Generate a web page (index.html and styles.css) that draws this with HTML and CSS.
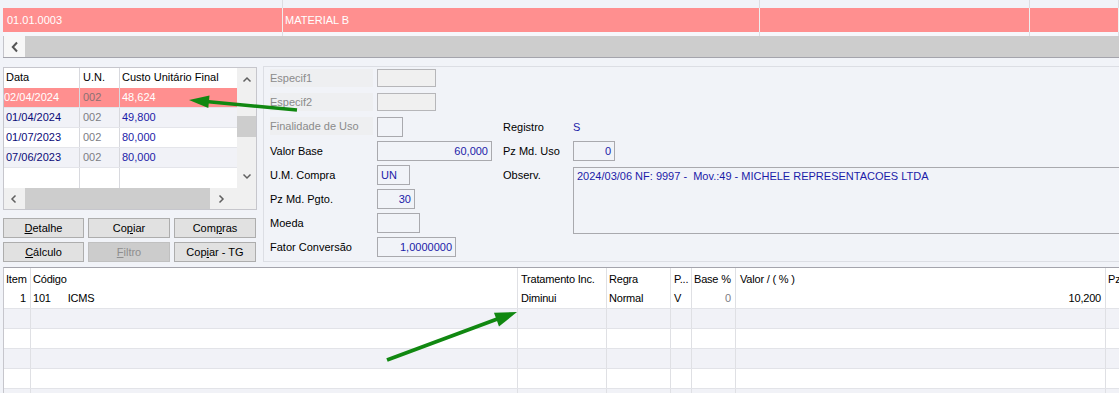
FILE: index.html
```html
<!DOCTYPE html>
<html lang="pt-BR">
<head>
    <meta charset="UTF-8">
    <title>Custo de Produto</title>
    <link rel="stylesheet" href="styles.css">
</head>
<body>
    <div class="top-grid">
        <div class="top-line top-head">
            <span class="t1"></span><span class="t2"></span><span class="t3"></span><span class="t4"></span>
        </div>
        <div class="top-line top-row">
            <span class="t1">01.01.0003</span><span class="t2">MATERIAL B</span><span class="t3"></span><span class="t4"></span>
        </div>
        <div class="top-line top-tail">
            <span class="t1"></span><span class="t2"></span><span class="t3"></span><span class="t4"></span>
        </div>
        <div class="top-scroll">
            <span class="top-btn">
                <svg width="10" height="12" viewBox="0 0 10 12"><path d="M7 1.5 L2.8 6 L7 10.5" fill="none" stroke="#555" stroke-width="2"/></svg>
            </span>
            <span class="top-track"></span>
        </div>
    </div>

    <div class="middle">
        <div class="left-col">
            <div class="list">
                <div class="list-main">
                    <div class="list-rows">
                        <div class="lrow head"><span class="l-data">Data</span><span class="l-un">U.N.</span><span class="l-custo">Custo Unitário Final</span></div>
                        <div class="lrow sel"><span class="l-data">02/04/2024</span><span class="l-un">002</span><span class="l-custo">48,624</span></div>
                        <div class="lrow alt"><span class="l-data">01/04/2024</span><span class="l-un">002</span><span class="l-custo">49,800</span></div>
                        <div class="lrow"><span class="l-data">01/07/2023</span><span class="l-un">002</span><span class="l-custo">80,000</span></div>
                        <div class="lrow alt"><span class="l-data">07/06/2023</span><span class="l-un">002</span><span class="l-custo">80,000</span></div>
                        <div class="lrow last"><span class="l-data"></span><span class="l-un"></span><span class="l-custo"></span></div>
                    </div>
                    <div class="vscroll">
                        <svg class="chev" width="10" height="10" viewBox="0 0 10 10"><path d="M1.5 6.5 L5 3 L8.5 6.5" fill="none" stroke="#606060" stroke-width="1.5"/></svg>
                        <span class="vthumb"></span>
                        <svg class="chev down" width="10" height="10" viewBox="0 0 10 10"><path d="M1.5 3.5 L5 7 L8.5 3.5" fill="none" stroke="#606060" stroke-width="1.5"/></svg>
                    </div>
                </div>
                <div class="list-foot">
                    <div class="hscroll">
                        <svg class="chev" width="10" height="10" viewBox="0 0 10 10"><path d="M6.5 1.5 L3 5 L6.5 8.5" fill="none" stroke="#606060" stroke-width="1.5"/></svg>
                        <span class="hthumb"></span>
                        <svg class="chev" width="10" height="10" viewBox="0 0 10 10"><path d="M3.5 1.5 L7 5 L3.5 8.5" fill="none" stroke="#606060" stroke-width="1.5"/></svg>
                    </div>
                    <div class="corner"></div>
                </div>
            </div>

            <div class="btns">
                <button class="btn"><u>D</u>etalhe</button>
                <button class="btn">Co<u>p</u>iar</button>
                <button class="btn">Com<u>p</u>ras</button>
                <button class="btn"><u>C</u>álculo</button>
                <button class="btn off"><u>F</u>iltro</button>
                <button class="btn">Cop<u>i</u>ar - TG</button>
            </div>
        </div>

        <div class="form">
            <span class="lbl off">Especif1</span>
            <span class="box off short" style="width: 59px;"></span>
            <span></span><span></span>

            <span class="lbl off">Especif2</span>
            <span class="box off short" style="width: 59px;"></span>
            <span></span><span></span>

            <span class="lbl off">Finalidade de Uso</span>
            <span class="box" style="width: 26px;"></span>
            <span class="lbl">Registro</span>
            <span class="val">S</span>

            <span class="lbl">Valor Base</span>
            <span class="box num" style="width: 115px;">60,000</span>
            <span class="lbl">Pz Md. Uso</span>
            <span class="box num" style="width: 42px;">0</span>

            <span class="lbl">U.M. Compra</span>
            <span class="box" style="width: 33px;">UN</span>
            <span class="lbl">Observ.</span>
            <span class="memo">2024/03/06 NF: 9997 -&nbsp; Mov.:49 - MICHELE REPRESENTACOES LTDA</span>

            <span class="lbl">Pz Md. Pgto.</span>
            <span class="box num" style="width: 38px;">30</span>
            <span></span>

            <span class="lbl">Moeda</span>
            <span class="box" style="width: 43px;"></span>
            <span></span>

            <span class="lbl">Fator Conversão</span>
            <span class="box num" style="width: 79px;">1,0000000</span>
            <span></span><span></span>
        </div>
    </div>

    <div class="tax-grid">
        <div class="grow ghead">
            <span class="g-item">Item</span><span class="g-cod">Código</span><span class="g-trat">Tratamento Inc.</span><span class="g-regra">Regra</span><span class="g-p">P...</span><span class="g-base">Base %</span><span class="g-valor">Valor / ( % )</span><span class="g-pz">Pz</span>
        </div>
        <div class="grow gdata">
            <span class="g-item r">1</span><span class="g-cod">101<span class="g-name">ICMS</span></span><span class="g-trat">Diminui</span><span class="g-regra">Normal</span><span class="g-p">V</span><span class="g-base r dim">0</span><span class="g-valor r">10,200</span><span class="g-pz"></span>
        </div>
        <div class="grow alt"><span class="g-item"></span><span class="g-cod"></span><span class="g-trat"></span><span class="g-regra"></span><span class="g-p"></span><span class="g-base"></span><span class="g-valor"></span><span class="g-pz"></span></div>
        <div class="grow"><span class="g-item"></span><span class="g-cod"></span><span class="g-trat"></span><span class="g-regra"></span><span class="g-p"></span><span class="g-base"></span><span class="g-valor"></span><span class="g-pz"></span></div>
        <div class="grow alt"><span class="g-item"></span><span class="g-cod"></span><span class="g-trat"></span><span class="g-regra"></span><span class="g-p"></span><span class="g-base"></span><span class="g-valor"></span><span class="g-pz"></span></div>
        <div class="grow"><span class="g-item"></span><span class="g-cod"></span><span class="g-trat"></span><span class="g-regra"></span><span class="g-p"></span><span class="g-base"></span><span class="g-valor"></span><span class="g-pz"></span></div>
        <div class="grow alt"><span class="g-item"></span><span class="g-cod"></span><span class="g-trat"></span><span class="g-regra"></span><span class="g-p"></span><span class="g-base"></span><span class="g-valor"></span><span class="g-pz"></span></div>
    </div>

    <!-- setas de anotação por cima da tela -->
    <svg class="marks" width="1119" height="393" viewBox="0 0 1119 393">
        <line x1="297" y1="110" x2="206" y2="101.5" stroke="#118811" stroke-width="3.5"/>
        <polygon points="189,100 209.5,95.5 208.3,108" fill="#118811"/>
        <line x1="387" y1="360" x2="500" y2="318" stroke="#118811" stroke-width="4"/>
        <polygon points="517,312 494,312.8 499,326.5" fill="#118811"/>
    </svg>
</body>
</html>
```

FILE: styles.css
```css
html, body {
    margin: 0;
    padding: 0;
}
body {
    width: 1119px;
    height: 393px;
    overflow: hidden;
    position: relative;
    background-color: #f1f3f8;
    font-family: "Liberation Sans", Arial, sans-serif;
    font-size: 11px;
    color: #000;
}

/* grade superior */
.top-grid {
    margin-left: 3px;
    overflow: hidden;
    border-bottom: 1px solid #a4a4ac;
}
.top-line {
    display: flex;
}
.top-line span {
    box-sizing: border-box;
    flex: none;
    border-right: 1px solid #dcdde2;
}
.top-line .t1 { width: 280px; }
.top-line .t2 { width: 477px; }
.top-line .t3 { width: 270px; }
.top-line .t4 { flex: 1; }
.top-head {
    height: 8px;
}
.top-row {
    height: 24px;
    background-color: #ff8f8f;
}
.top-row span {
    border-right-color: #eee;
    color: #fff;
    line-height: 24px;
    padding-left: 4px;
}
.top-row .t2 {
    padding-left: 2px;
}
.top-tail {
    height: 4px;
    background-color: #f6f7fb;
}
.top-scroll {
    display: flex;
    height: 21px;
    border-left: 1px solid #c4c4ca;
}
.top-btn {
    width: 21px;
    background-color: #f7f7f7;
    display: flex;
    align-items: center;
    justify-content: center;
}
.top-track {
    flex: 1;
    background-color: #cdcdcd;
}

/* meio */
.middle {
    display: flex;
    margin-top: 8px;
    gap: 6px;
}
.left-col {
    margin-left: 3px;
    margin-top: 1px;
    width: 254px;
    flex: none;
}
.list {
    box-sizing: border-box;
    width: 254px;
    height: 143px;
    border: 1px solid #c6c6cc;
    background-color: #fff;
}
.list-main {
    display: flex;
    height: 120px;
}
.list-rows {
    width: 233px;
}
.lrow {
    display: flex;
    height: 20px;
    box-sizing: border-box;
    border-bottom: 1px solid #e4e5ea;
    line-height: 19px;
}
.lrow span {
    box-sizing: border-box;
    border-right: 1px solid #d8d9de;
    padding-left: 2px;
    white-space: nowrap;
    overflow: hidden;
}
.lrow .l-data { width: 76px; color: #0b0b78; }
.lrow .l-un { width: 40px; color: #7c7c84; padding-left: 3px; }
.lrow .l-custo { width: 117px; color: #1b1ba8; border-right: none; }
.lrow.head span { color: #000; }
.lrow.head { border-bottom: none; }
.lrow.sel { background-color: #ff8f8f; }
.lrow.sel .l-data,
.lrow.sel .l-custo { color: #fff; }
.lrow.sel .l-un { color: #8b6f72; }
.lrow.sel .l-data { padding-left: 0; }
.lrow.alt { background-color: #f1f2f7; }
.lrow.last { border-bottom: none; }

.vscroll {
    width: 19px;
    background-color: #f0f0f0;
    position: relative;
}
.chev {
    display: block;
}
.vscroll .chev {
    position: absolute;
    left: 5px;
    top: 7px;
}
.vscroll .chev.down {
    top: auto;
    bottom: 7px;
}
.vthumb {
    position: absolute;
    left: 0;
    top: 48px;
    width: 19px;
    height: 21px;
    background-color: #cdcdcd;
}
.list-foot {
    display: flex;
    height: 21px;
}
.hscroll {
    width: 233px;
    display: flex;
    align-items: center;
    background-color: #f0f0f0;
    padding-left: 5px;
    box-sizing: border-box;
    gap: 6px;
}
.hthumb {
    width: 185px;
    height: 21px;
    background-color: #cdcdcd;
}
.corner {
    width: 19px;
    background-color: #f0f0f0;
}

/* botões */
.btns {
    display: grid;
    grid-template-columns: 81px 82px 82px;
    grid-auto-rows: 20px;
    column-gap: 4px;
    row-gap: 4px;
    margin-top: 8px;
}
.btn {
    box-sizing: border-box;
    height: 20px;
    padding: 0;
    border: 1px solid #adadad;
    background-color: #e1e1e1;
    font-family: "Liberation Sans", Arial, sans-serif;
    font-size: 11px;
    color: #000;
}
.btn.off {
    background-color: #cccccc;
    border-color: #c0c0c0;
    color: #8e8e8e;
}

/* formulário */
.form {
    box-sizing: border-box;
    flex: 1;
    min-width: 0;
    height: 196px;
    border: 1px solid #dcdee4;
    border-right: none;
    padding: 2px 0 0 6px;
    display: grid;
    grid-template-columns: 103px 122px 66px 1fr;
    grid-auto-rows: 20px;
    column-gap: 4px;
    row-gap: 4px;
}
.lbl {
    line-height: 20px;
    white-space: nowrap;
}
.lbl.off {
    background-color: #eeeff1;
    color: #8b8b8b;
    line-height: 18px;
    height: 18px;
}
.val {
    color: #1b1ba8;
    line-height: 20px;
}
.box {
    box-sizing: border-box;
    height: 20px;
    border: 1px solid #a9a9ae;
    color: #1b1ba8;
    line-height: 18px;
    padding: 0 3px;
}
.box.num {
    text-align: right;
}
.box.off {
    background-color: #f0f0f0;
    border-color: #b6b6b9;
}
.box.short {
    height: 18px;
}
.memo {
    grid-row: span 3;
    box-sizing: border-box;
    margin-top: 2px;
    height: 67px;
    border: 1px solid #a9a9ae;
    border-right: none;
    color: #1b1ba8;
    padding: 2px 3px;
    white-space: nowrap;
    overflow: hidden;
}

/* grade de impostos */
.tax-grid {
    margin-top: 5px;
    margin-left: 3px;
    overflow: hidden;
    border-top: 1px solid #a4a4ac;
    border-left: 1px solid #c6c6cc;
    background-color: #fff;
    font-size: 11px;
    letter-spacing: -0.2px;
}
.grow {
    display: flex;
    height: 20px;
    box-sizing: border-box;
    border-bottom: 1px solid #e2e3e8;
}
.grow span {
    box-sizing: border-box;
    flex: none;
    border-right: 1px solid #dfe0e4;
    padding: 0 2px;
    white-space: nowrap;
    overflow: hidden;
}
.grow.ghead {
    height: 21px;
    border-bottom: none;
    line-height: 23px;
}
.grow.gdata {
    height: 20px;
    line-height: 18px;
}
.grow.alt {
    background-color: #f1f2f7;
}
.g-item { width: 27px; }
.g-cod { width: 487px; }
.g-trat { width: 89px; padding-left: 3px !important; }
.g-regra { width: 64px; }
.g-p { width: 21px; padding-left: 3px !important; }
.g-base { width: 44px; }
.g-valor { width: 370px; padding-left: 4px !important; }
.grow .g-pz { flex: 1; border-right: none; }
.grow .r {
    text-align: right;
    padding-right: 4px;
}
.grow .dim {
    color: #7c7c84;
}
.g-name {
    border: none !important;
    padding-left: 17px !important;
}

/* setas */
.marks {
    position: absolute;
    left: 0;
    top: 0;
    pointer-events: none;
}
```
